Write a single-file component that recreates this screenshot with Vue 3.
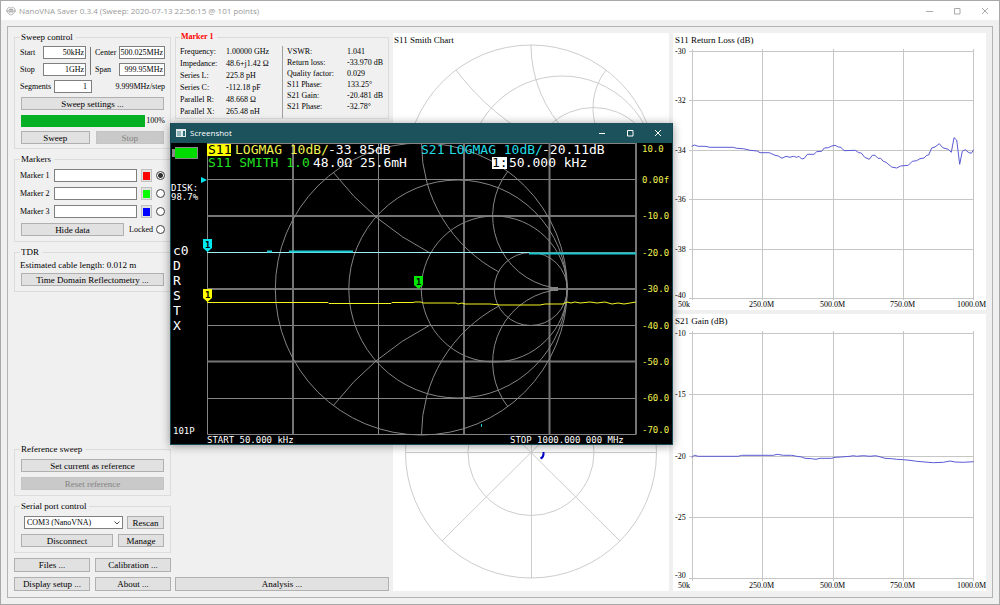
<script setup>
import { ref } from 'vue'

const chosen = ref(1)
const markers = [
  { id: 1, color: '#ff0000' },
  { id: 2, color: '#00ff00' },
  { id: 3, color: '#0000ff' },
]
const leftStats = [
  ['Frequency:', '1.00000 GHz'],
  ['Impedance:', '48.6+j1.42 Ω'],
  ['Series L:', '225.8 pH'],
  ['Series C:', '-112.18 pF'],
  ['Parallel R:', '48.668 Ω'],
  ['Parallel X:', '265.48 nH'],
]
const rightStats = [
  ['VSWR:', '1.041'],
  ['Return loss:', '-33.970 dB'],
  ['Quality factor:', '0.029'],
  ['S11 Phase:', '133.25°'],
  ['S21 Gain:', '-20.481 dB'],
  ['S21 Phase:', '-32.78°'],
]
const third = (list, dx, dy) =>
  list.map(([x, y]) => `${(x / 3 + dx).toFixed(1)},${(y / 3 + dy).toFixed(1)}`).join(' ')

const lossTrace = third([[65,439],[73,435],[85,439],[105,439],[120,442],[190,442],[200,445],[220,446],[240,451],[262,453],[270,458],[298,458],[315,466],[325,468],[336,475],[348,469],[360,472],[370,469],[380,472],[387,469],[395,477],[403,475],[412,463],[432,463],[440,455],[455,454],[463,444],[475,443],[485,438],[495,436],[505,441],[513,442],[522,452],[556,451],[566,458],[574,459],[584,472],[598,478],[607,466],[615,466],[624,475],[632,475],[640,484],[648,487],[665,501],[680,504],[692,498],[715,496],[727,484],[740,482],[750,476],[762,474],[770,466],[776,465],[785,444],[795,441],[808,431],[818,443],[835,448],[844,457],[852,413],[860,420],[869,493],[877,454],[886,449],[895,457],[904,460],[911,449]], -3, -33)
const gainTrace = third([[65,112],[73,106],[85,109],[205,109],[215,106],[310,106],[322,103],[340,106],[365,106],[380,109],[395,111],[405,115],[425,116],[438,118],[450,115],[485,115],[495,112],[512,111],[540,109],[550,107],[560,109],[580,107],[600,109],[617,107],[632,111],[645,115],[665,116],[680,118],[700,119],[720,121],[740,124],[765,126],[790,128],[820,127],[840,123],[855,126],[880,127],[911,125]], -3, 106)

const charts = [
  {
    title: 'S11 Return Loss (dB)', trace: lossTrace,
    rows: [[18, '-30'], [67, '-32'], [117, '-34'], [166, '-36'], [216, '-38'], [265, '-40']],
  },
  {
    title: 'S21 Gain (dB)', trace: gainTrace,
    rows: [[19, '-10'], [80, '-15'], [142, '-20'], [203, '-25'], [264, '-30']],
  },
]
const cols = [[19, '50k', 5], [89, '250.0M', 76], [160, '500.0M', 147], [230, '750.0M', 217], [300, '1000.0M', 284]]
const scale = [[152, '10.0'], [183, '0.00f'], [219, '-10.0'], [256, '-20.0'], [292, '-30.0'], [329, '-40.0'], [365, '-50.0'], [401, '-60.0'], [433, '-70.0']]
const side = ['c0', 'D', 'R', 'S', 'T', 'X']
</script>

<template>
  <div class="window">
    <header class="titlebar">
      <svg class="logo" viewBox="0 0 10 10" width="10" height="10">
        <path d="M1 3L3 1L5 2L7 1L9 3V6L7 8L5 9L3 8L1 6Z" fill="#eee" stroke="#c4c4c4" />
        <path d="M0 5H10M3 3.500H7M3 6.500L5 5L7 6.500" stroke="#a8a8a8" fill="none" />
      </svg>
      <h1>NanoVNA Saver 0.3.4 (Sweep: 2020-07-13 22:56:15 @ 101 points)</h1>
      <div class="caption">
        <button aria-label="Minimize"><svg width="8" height="8"><path d="M1 4.500H8" /></svg></button>
        <button aria-label="Maximize"><svg width="8" height="8"><path d="M1.500 1.500H7V7H1.500Z" /></svg></button>
        <button aria-label="Close"><svg width="8" height="8"><path d="M1 1L7 7M7 1L1 7" /></svg></button>
      </div>
    </header>

    <main class="frame">
      <section class="controls">
        <fieldset class="sweep">
          <legend>Sweep control</legend>
          <div class="ranges">
            <label for="start">Start</label><input id="start" value="50kHz" />
            <i class="rule"></i>
            <label for="center">Center</label><input id="center" value="500.025MHz" />
            <label for="stop">Stop</label><input id="stop" value="1GHz" />
            <label for="span">Span</label><input id="span" value="999.95MHz" />
          </div>
          <div class="row">
            <label for="segments" class="seg">Segments</label><input id="segments" class="segbox" value="1" />
            <span class="end num">9.999MHz/step</span>
          </div>
          <button class="btn">Sweep settings ...</button>
          <div class="row">
            <div class="progress" role="progressbar" aria-valuenow="100"></div><span class="num">100%</span>
          </div>
          <div class="row pair"><button class="btn">Sweep</button><button class="btn" disabled>Stop</button></div>
        </fieldset>

        <fieldset>
          <legend>Markers</legend>
          <div v-for="m in markers" :key="m.id" class="row">
            <label :for="'m' + m.id" class="seg">Marker {{ m.id }}</label>
            <input :id="'m' + m.id" class="grow" />
            <button class="swatch" :aria-label="'Marker ' + m.id + ' colour'"><i :style="{ background: m.color }"></i></button>
            <input v-model="chosen" type="radio" name="marker" :value="m.id" :aria-label="'Use marker ' + m.id" />
          </div>
          <div class="row">
            <button class="btn hide">Hide data</button>
            <label for="locked" class="end">Locked</label><input id="locked" class="lock" type="radio" name="lock" />
          </div>
        </fieldset>

        <fieldset class="tdr">
          <legend>TDR</legend>
          <p>Estimated cable length: 0.012 m</p>
          <button class="btn">Time Domain Reflectometry ...</button>
        </fieldset>

        <fieldset class="bottom">
          <legend>Reference sweep</legend>
          <button class="btn">Set current as reference</button>
          <button class="btn" disabled>Reset reference</button>
        </fieldset>

        <fieldset>
          <legend>Serial port control</legend>
          <div class="row port">
            <div class="select">
              <select aria-label="Serial port"><option>COM3 (NanoVNA)</option></select>
              <svg width="6" height="4"><path d="M0.500 0.500L3 3L5.500 0.500" fill="none" stroke="#444" /></svg>
            </div>
            <button class="btn rescan">Rescan</button>
          </div>
          <div class="row port"><button class="btn">Disconnect</button><button class="btn manage">Manage</button></div>
        </fieldset>
        <div class="row pair tools"><button class="btn">Files ...</button><button class="btn">Calibration ...</button></div>
        <div class="row pair tools"><button class="btn">Display setup ...</button><button class="btn">About ...</button></div>
      </section>

      <section class="middle">
        <fieldset class="stats">
          <legend class="red">Marker 1</legend>
          <dl class="left"><template v-for="s in leftStats" :key="s[0]"><dt>{{ s[0] }}</dt><dd>{{ s[1] }}</dd></template></dl>
          <dl class="right"><template v-for="s in rightStats" :key="s[0]"><dt>{{ s[0] }}</dt><dd>{{ s[1] }}</dd></template></dl>
        </fieldset>
        <button class="btn analysis">Analysis ...</button>
      </section>

      <section class="plots">
        <svg class="plot" viewBox="0 0 276 277">
          <text x="1" y="10">S11 Smith Chart</text>
          <g class="grid">
            <circle cx="138" cy="137" r="125" />
            <circle cx="169" cy="137" r="94" />
            <circle cx="200.500" cy="137" r="62.500" />
            <circle cx="231.500" cy="137" r="31.500" />
            <path d="M138 12A125 125 0 0 0 263 137M63 37A250 250 0 0 0 263 137M213 37A62 62 0 0 0 263 137" />
          </g>
        </svg>
        <svg class="plot" viewBox="0 0 276 277">
          <g class="grid">
            <circle cx="138" cy="138.500" r="125.500" />
            <circle cx="138" cy="138.500" r="63" />
            <path d="M12.500 138.500H263.500M138.500 13V264M49 50L227 227M227 50L49 227" />
          </g>
          <path d="M150.500 138Q151 143 147.500 144.500" fill="none" stroke="#0000c8" stroke-width="2" />
        </svg>
      </section>

      <section class="plots">
        <svg v-for="c in charts" :key="c.title" class="plot" viewBox="0 0 313 277">
          <text x="2" y="10">{{ c.title }}</text>
          <g class="grid lines">
            <path v-for="r in c.rows" :key="r[1]" :d="`M16 ${r[0] + 0.5}H301`" />
            <path v-for="v in cols" :key="v[1]" :d="`M${v[0] + 0.5} ${c.rows[0][0] - 2}V267`" />
          </g>
          <text v-for="(r, i) in c.rows" :key="r[1]" class="tick" x="2" :y="i === c.rows.length - 1 ? r[0] : r[0] + 3">{{ r[1] }}</text>
          <text v-for="v in cols" :key="v[1]" class="tick" :x="v[2]" y="274">{{ v[1] }}</text>
          <polyline :points="c.trace" />
        </svg>
      </section>
    </main>

    <section class="shot">
      <header>
        <svg width="10" height="8"><path d="M0 0H10V8H0Z" fill="#dfe9ea" /><path d="M1 2H5V7H1Z" fill="#8fb4b8" /><path d="M7 2H9V7H7Z" fill="#2a6d75" /></svg>
        <h2>Screenshot</h2>
        <div class="caption">
          <button aria-label="Minimize"><svg width="8" height="8"><path d="M1 4.500H7" /></svg></button>
          <button aria-label="Maximize"><svg width="8" height="8"><path d="M1.500 1.500H7V7H1.500Z" /></svg></button>
          <button aria-label="Close"><svg width="8" height="8"><path d="M1 1L7 7M7 1L1 7" /></svg></button>
        </div>
      </header>
      <svg class="screen" viewBox="171 143 501 301">
        <path d="M172 149H175V147H198V159H175V157H172Z" fill="#888" />
        <path d="M175 148H197V158H175Z" fill="#00dc00" />
        <g class="mesh">
          <path d="M207.500 143V434.500M378.500 143V434.500M207.500 143.500H636M207.500 179.500H636M207.500 325.500H636M207.500 398.500H636M207.500 434.500H636M207.500 252.500H636" />
          <path class="thick" d="M293 143V434.500M464 143V434.500M549.500 143V434.500M636 143V434.500M207 216H636M207 289H636M207 361.500H636" />
          <circle cx="421.300" cy="289" r="146" />
          <circle cx="457.800" cy="289" r="109" />
          <circle cx="494.300" cy="289" r="73" />
          <circle cx="530.700" cy="289" r="36.500" />
          <path d="M333 172A292 292 0 0 0 430 253M421.500 143A146 146 0 0 0 499 272M508 171A73 73 0 0 0 552 287.500" />
          <path d="M333 406A292 292 0 0 1 430 325M421.500 435A146 146 0 0 1 499 306M508 407A73 73 0 0 1 552 290.500" />
          <path d="M550 289H558" stroke-width="4" />
        </g>
        <path d="M207 252.500H530" stroke="#9ff0f5" />
        <path d="M267 251.500H272M289 251.500H353M529 253.500H636" stroke="#18c8d0" stroke-width="2" />
        <path d="M481.500 424V427" stroke="#18c8d0" />
        <polyline class="yellow" points="207,302.500 328,302.500 329,303.500 391,303.500 392,302.500 413,302.500 415,302 421,302 423,303 456,303 458,304 462,303 465,304 490,304 500,305 540,305 545,304 563,304 567,302 571,303 575,302 580,303 590,302 597,303 605,302 612,304 618,303 624,304 630,303 636,302" />
        <path d="M201 177V183L207 180Z" fill="#00e8f0" />
        <path d="M203 239H212V248L207.500 252L203 248Z" fill="#00e8f0" />
        <path d="M203 289H212V298L207.500 302L203 298Z" fill="#ffff00" />
        <path d="M414 276H423V285L418.500 289L414 285Z" fill="#00e800" />
        <g class="pin"><text x="205" y="248">1</text><text x="205" y="298">1</text><text x="416" y="285">1</text></g>
        <path d="M207 144H231V156H207Z" fill="#ffff00" />
        <path d="M492 157H507V169H492Z" fill="#ffffff" />
        <g class="big">
          <text x="208" y="154" class="dark">S11</text>
          <text x="235" y="154" class="lemon">LOGMAG 10dB/</text>
          <text x="328" y="154">-33.85dB</text>
          <text x="421" y="154" class="cyan">S21</text>
          <text x="449" y="154" class="cyan">LOGMAG 10dB/</text>
          <text x="542" y="154">-20.11dB</text>
          <text x="208" y="167" class="green">S11 SMITH 1.0</text>
          <text x="313" y="167">48.0Ω 25.6mH</text>
          <text x="492" y="167" class="dark">1:</text>
          <text x="509" y="167">50.000 kHz</text>
          <text v-for="(s, i) in side" :key="s" x="173" :y="255 + i * 15">{{ s }}</text>
        </g>
        <g class="small">
          <text x="171" y="191">DISK:</text>
          <text x="171" y="200">98.7%</text>
          <text x="173" y="434">101P</text>
          <text x="207" y="443">START 50.000 kHz</text>
          <text x="510" y="443">STOP 1000.000 000 MHz</text>
          <text v-for="s in scale" :key="s[1]" x="642" :y="s[0]" class="lemon">{{ s[1] }}</text>
        </g>
      </svg>
    </section>
  </div>
</template>

<style>
body { margin: 0; background: #f0f0f0; }
</style>

<style scoped>
* { box-sizing: border-box; }
.window {
  position: relative;
  height: 100vh;
  display: flex;
  flex-direction: column;
  border: 1px solid #a8a8a8;
  background: #f0f0f0;
  color: #000;
  font: 8px/10px "Liberation Serif", serif;
}
.titlebar, .shot header { display: flex; align-items: center; height: 19px; padding-left: 5px; background: #fff; gap: 3px; flex: none; }
h1, h2 { margin: 0; font: 8px/12px "Open Sans", sans-serif; color: #999; white-space: nowrap; }
.caption { margin-left: auto; display: flex; }
.caption button { width: 28px; height: 18px; padding: 0; border: 0; background: none; display: grid; place-items: center; }
.caption path { fill: none; stroke: #aaa; }
.frame {
  flex: 1;
  min-height: 0;
  margin: 6px;
  padding: 5px 6px 6px;
  border: 1px solid #b4b4b4;
  display: grid;
  grid-template-columns: 157px 214px 276fr 313fr;
  grid-template-rows: minmax(0, 1fr);
  gap: 4px;
}
.controls, .middle, .plots { display: flex; flex-direction: column; min-width: 0; min-height: 0; gap: 5px; }
fieldset { min-width: 0; margin: 0; padding: 5px; border: 1px solid #dcdcdc; display: flex; flex-direction: column; gap: 5px; }
legend { margin: 0; padding: 0 3px 0 1px; line-height: 10px; font-size: 9px; }
label { font-size: 8px; white-space: nowrap; }
p { margin: 0; font-size: 9px; white-space: nowrap; }
.sweep { gap: 4px; padding-top: 4px; padding-bottom: 4px; }
.ranges { display: grid; grid-template-columns: 23px 43px 9px 24px minmax(0, 1fr); grid-auto-rows: 13px; row-gap: 4px; align-items: center; }
.rule { grid-row: 1 / 3; grid-column: 3; width: 1px; height: 28px; background: #777; justify-self: center; }
.row { display: flex; align-items: center; height: 13px; flex: none; }
.pair { gap: 4px; }
.pair .btn { flex: 1; min-width: 0; }
input { height: 13px; width: 100%; min-width: 0; margin: 0; padding: 0 1px 0 0; border: 1px solid #7f7f7f; background: #fff; font: 8px/10px "Liberation Serif", serif; text-align: right; color: #000; }
.seg { width: 34px; flex: none; }
.segbox { width: 38px; padding-right: 4px; }
.end { margin-left: auto; }
.num { font-size: 8px; }
.btn { height: 13px; flex: none; margin: 0 1px; padding: 0; border: 1px solid #b0b0b0; background: #e1e1e1; font: 9px/10px "Liberation Serif", serif; color: #000; white-space: nowrap; }
.btn:disabled { background: #c9c9c9; border-color: #c4c4c4; color: #838383; }
.progress { width: 125px; height: 12px; margin: 0 1px; background: #06b025; }
.row .grow { flex: 1; }
.swatch { width: 11px; height: 13px; margin: 0 4px; padding: 0; border: 1px solid #c0c0c0; background: #e1e1e1; display: grid; place-items: center; flex: none; }
.swatch i { width: 7px; height: 8px; }
input[type="radio"] { appearance: none; width: 9px; height: 9px; padding: 0; border: 1px solid #444; border-radius: 50%; flex: none; }
input[type="radio"]:checked { background: radial-gradient(circle, #333 0 2px, #fff 3px); }
.lock { margin-left: 3px; }
.hide { width: 103px; }
.tdr { padding-top: 3px; gap: 3px; }
.bottom { margin-top: auto; }
.port { gap: 3px; }
.port .btn { flex: 1; }
.port .rescan { flex: 0 0 37px; }
.port .manage { flex: 0 0 46px; }
.select { position: relative; flex: 1; margin-left: 4px; height: 13px; }
.select svg { position: absolute; right: 3px; top: 5px; pointer-events: none; }
select { appearance: none; width: 100%; height: 13px; padding: 0 2px; border: 1px solid #7f7f7f; border-radius: 0; background: #fff; font: 8px/10px "Liberation Serif", serif; color: #000; display: block; }
.tools { height: 14px; gap: 5px; }
.tools .btn { height: 14px; margin: 0; }
.stats { flex-direction: row; gap: 0; padding: 4px; height: 87px; }
.red { color: #f00; font-weight: bold; font-size: 8px; }
dl { margin: 0; display: grid; align-content: start; white-space: nowrap; }
dt, dd { margin: 0; }
.left { grid-template-columns: 46px 56px; grid-auto-rows: 12px; line-height: 12px; border-right: 1px solid #a0a0a0; flex: none; }
.right { grid-template-columns: 60px 1fr; grid-auto-rows: 11px; line-height: 11px; padding-left: 4px; }
.analysis { height: 14px; margin: auto 0 0; }
.plots { padding-top: 1px; gap: 4px; }
.plot { display: block; flex: 1; min-height: 0; width: 100%; background: #fff; }
.plot text { font: 9px "Liberation Serif", serif; fill: #000; }
.plot .tick { font-size: 8px; }
.grid { fill: none; stroke: #cdcdcd; }
.lines { stroke: #c6c6c6; }
polyline { fill: none; stroke: #5a5ad2; }
.shot { position: absolute; left: 169px; top: 122px; width: 503px; border: 1px solid #174a54; border-top: 0; background: #000; box-shadow: 0 1px 9px rgba(0, 0, 0, 0.4); }
.shot header { height: 20px; background: #1b525c; gap: 4px; }
.shot h2 { color: #fff; }
.shot .caption path { stroke: #fff; }
.screen { display: block; width: 100%; background: #000; }
.mesh { fill: none; stroke: #858585; }
.thick { stroke-width: 2; stroke: #757575; }
.yellow { stroke: #f4f420; }
.big text { font: 13px "DejaVu Sans Mono", monospace; fill: #fff; }
.small text { font: 9px "DejaVu Sans Mono", monospace; fill: #fff; }
.pin text { font: bold 9px "DejaVu Sans Mono", monospace; fill: #000; }
.screen .dark { fill: #000; }
.screen .lemon { fill: #f0f050; }
.screen .cyan { fill: #20dce4; }
.screen .green { fill: #20e020; }
</style>
